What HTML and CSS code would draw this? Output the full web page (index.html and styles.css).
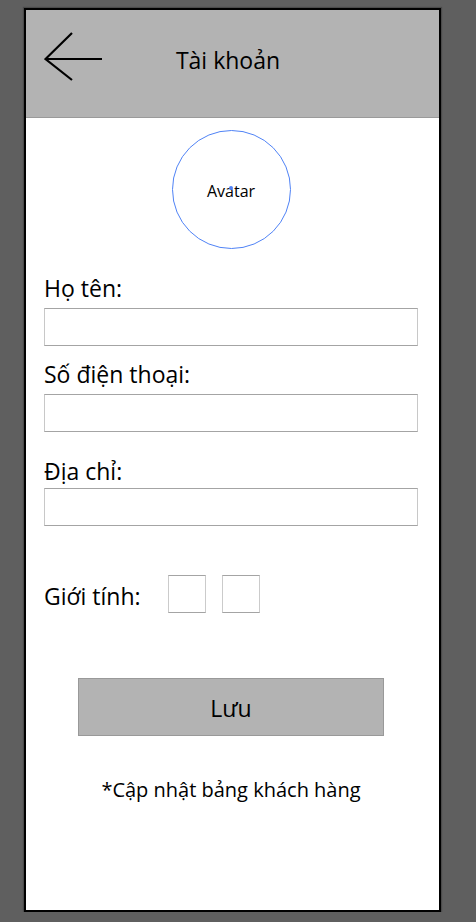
FILE: index.html
```html
<!doctype html>
<html lang="vi">

<head>
  <meta charset="utf-8">
  <title>Tài khoản</title>
  <link rel="stylesheet" href="styles.css">
</head>

<body>
  <div class="screen">

    <div class="topBar">
      <svg class="backArrow" width="60" height="50" viewBox="0 0 60 50">
        <path d="M28 1 L1.5 27 L28 48 M1.5 27 L58 27" fill="none" stroke="#000" stroke-width="2.2" />
      </svg>
      <h1 class="title">Tài khoản</h1>
    </div>

    <div class="content">
      <div class="avatar">
        <span class="avatarText">Avatar</span>
      </div>

      <label class="fieldLabel first">Họ tên:</label>
      <div class="textBox"></div>

      <label class="fieldLabel second">Số điện thoại:</label>
      <div class="textBox"></div>

      <label class="fieldLabel third">Địa chỉ:</label>
      <div class="textBox address"></div>

      <div class="genderRow">
        <span class="genderLabel">Giới tính:</span>
        <span class="checkBox"></span>
        <span class="checkBox"></span>
      </div>

      <button class="saveBtn" type="button">Lưu</button>

      <p class="note">*Cập nhật bảng khách hàng</p>
    </div>

  </div>
</body>

</html>
```

FILE: styles.css
```css
body {
  margin: 0;
  background-color: #5f5f5f;
  font-family: "Open Sans", "Noto Sans", sans-serif;
  color: #000;
}

.screen {
  width: 413px;
  height: 900px;
  margin: 8px 0 0 24px;
  border: 2px solid #000;
  background-color: #fff;
  box-shadow: 0 0 1px 1px #4a4a4a;
  display: flex;
  flex-direction: column;
}

.topBar {
  height: 108px;
  padding: 0 0 13px 18px;
  box-sizing: border-box;
  background-color: #b3b3b3;
  border-bottom: 1px solid #9a9a9a;
  display: flex;
  align-items: center;
  flex-shrink: 0;
}

.backArrow {
  flex-shrink: 0;
}

.title {
  flex: 1;
  margin: 0;
  padding-right: 87px;
  padding-top: 5px;
  text-align: center;
  font-size: 23px;
  font-weight: normal;
  line-height: 30px;
}

.content {
  padding: 12px 21px 0 18px;
  display: flex;
  flex-direction: column;
}

.avatar {
  position: relative;
  align-self: center;
  width: 119px;
  height: 119px;
  box-sizing: border-box;
  border: 1.5px solid #5083f6;
  border-radius: 50%;
  display: flex;
  align-items: center;
  justify-content: center;
}

/* little center mark from the mockup */
.avatar::after {
  content: "";
  position: absolute;
  left: 56px;
  top: 55px;
  width: 4px;
  height: 4px;
  background-color: #4f80f5;
  border-radius: 50%;
}

.avatarText {
  font-size: 16px;
  line-height: 20px;
  margin-top: 2px;
}

.fieldLabel {
  display: block;
  font-size: 23px;
  line-height: 28px;
}

.fieldLabel.first {
  margin-top: 25px;
}

.fieldLabel.second {
  margin-top: 14px;
}

.fieldLabel.third {
  margin-top: 25px;
}

.textBox {
  height: 38px;
  margin-top: 6px;
  box-sizing: border-box;
  border: 1px solid #a4a4a4;
  border-right-color: #c8c8c8;
  border-left-color: #c8c8c8;
}

.textBox.address {
  margin-top: 3px;
}

.genderRow {
  margin-top: 49px;
  height: 38px;
  display: flex;
  align-items: center;
}

.genderLabel {
  font-size: 23px;
  line-height: 28px;
  margin-top: 4px;
  margin-right: 27px;
}

.checkBox {
  width: 38px;
  height: 38px;
  box-sizing: border-box;
  border: 1px solid #a4a4a4;
  border-left-color: #cbcbcb;
  border-right-color: #cbcbcb;
  margin-right: 16px;
}

.saveBtn {
  align-self: center;
  margin-top: 65px;
  width: 306px;
  height: 58px;
  background-color: #b3b3b3;
  border: 1px solid #999;
  font-family: "Open Sans", "Noto Sans", sans-serif;
  font-size: 23px;
  color: #000;
  padding: 2px 0 0 0;
}

.note {
  margin: 42px 0 0 0;
  text-align: center;
  font-size: 20px;
  line-height: 24px;
}
```
